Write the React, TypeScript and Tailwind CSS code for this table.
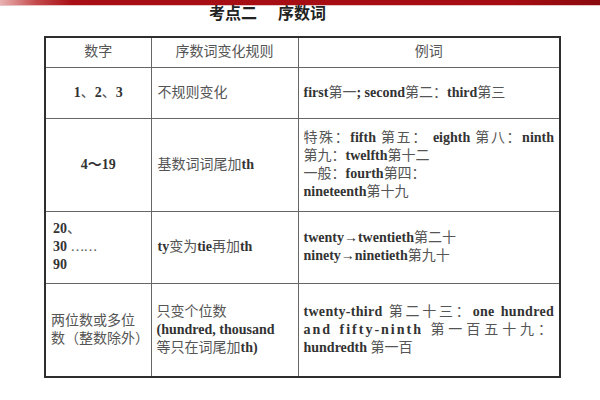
function B({ children }: { children: React.ReactNode }) {
  return <span className="font-bold text-[#333]">{children}</span>;
}

export default function App() {
  const cell = 'border border-[#666] align-middle';
  return (
    <div className="relative h-[400px] w-[600px] overflow-hidden bg-white text-[#555] [font-family:'Liberation_Serif','Noto_Sans_CJK_SC',serif]">
      {/* top bar */}
      <div className="h-[5px] w-full bg-[linear-gradient(90deg,#e9b3b3_0%,#c44a4c_6%,#a80f14_12%,#a50d12_85%,#8a0a0e_100%)]" />
      <div className="h-px w-full bg-[#e8c4c4]" />

      {/* title */}
      <div className="flex h-[16px] items-center pl-[209px] text-[16px] font-bold leading-none text-[#222]">
        <span>考点二</span>
        <span className="ml-[21px]">序数词</span>
      </div>

      {/* table */}
      <div className="ml-[44px] mt-[14px] w-[517px]">
        <table className="w-full table-fixed border-collapse border-2 border-[#2e2e2e] text-[14px] leading-[18px]">
          <colgroup>
            <col className="w-[106px]" />
            <col className="w-[147px]" />
            <col />
          </colgroup>
          <tbody>
            <tr className="h-[30px]">
              <td className={`${cell} text-center`}>数字</td>
              <td className={`${cell} text-center`}>序数词变化规则</td>
              <td className={`${cell} text-center`}>例词</td>
            </tr>
            <tr className="h-[51px]">
              <td className={`${cell} text-center`}>
                <B>1</B>、<B>2</B>、<B>3</B>
              </td>
              <td className={`${cell} pl-[6px]`}>不规则变化</td>
              <td className={`${cell} pl-[5px]`}>
                <B>first</B>第一<B>; second</B>第二：<B>third</B>第三
              </td>
            </tr>
            <tr className="h-[93px]">
              <td className={`${cell} text-center`}>
                <B>4～19</B>
              </td>
              <td className={`${cell} pl-[6px]`}>
                基数词词尾加<B>th</B>
              </td>
              <td className={`${cell} px-[5px]`}>
                <div className="[text-align-last:justify]">
                  特殊：<B>fifth</B> 第五： <B>eighth</B> 第八：<B>ninth</B>
                </div>
                <div>
                  第九：<B>twelfth</B>第十二
                </div>
                <div>
                  一般：<B>fourth</B>第四：
                </div>
                <div>
                  <B>nineteenth</B>第十九
                </div>
              </td>
            </tr>
            <tr className="h-[72px]">
              <td className={`${cell} pl-[7px]`}>
                <div>
                  <B>20</B>、
                </div>
                <div>
                  <B>30</B> <span className="tracking-[-1px]">……</span>
                </div>
                <div>
                  <B>90</B>
                </div>
              </td>
              <td className={`${cell} pl-[6px]`}>
                <B>ty</B>变为<B>tie</B>再加<B>th</B>
              </td>
              <td className={`${cell} pl-[5px]`}>
                <div>
                  <B>twenty→twentieth</B>第二十
                </div>
                <div>
                  <B>ninety→ninetieth</B>第九十
                </div>
              </td>
            </tr>
            <tr className="h-[94px]">
              <td className={`${cell} pl-[5px]`}>
                <div>两位数或多位</div>
                <div>数（整数除外）</div>
              </td>
              <td className={`${cell} pl-[5px]`}>
                <div>只变个位数</div>
                <div>
                  <B>(hundred, thousand</B>
                </div>
                <div>
                  等只在词尾加<B>th)</B>
                </div>
              </td>
              <td className={`${cell} px-[5px]`}>
                <div className="whitespace-nowrap tracking-[0.3px] [text-align-last:justify]">
                  <B>twenty-third</B> 第二十三：<B>one hundred</B>
                </div>
                <div className="whitespace-nowrap tracking-[2px] [text-align-last:justify]">
                  <B>and fifty-ninth</B> 第一百五十九：
                </div>
                <div>
                  <B>hundredth</B> 第一百
                </div>
              </td>
            </tr>
          </tbody>
        </table>
      </div>
    </div>
  );
}
